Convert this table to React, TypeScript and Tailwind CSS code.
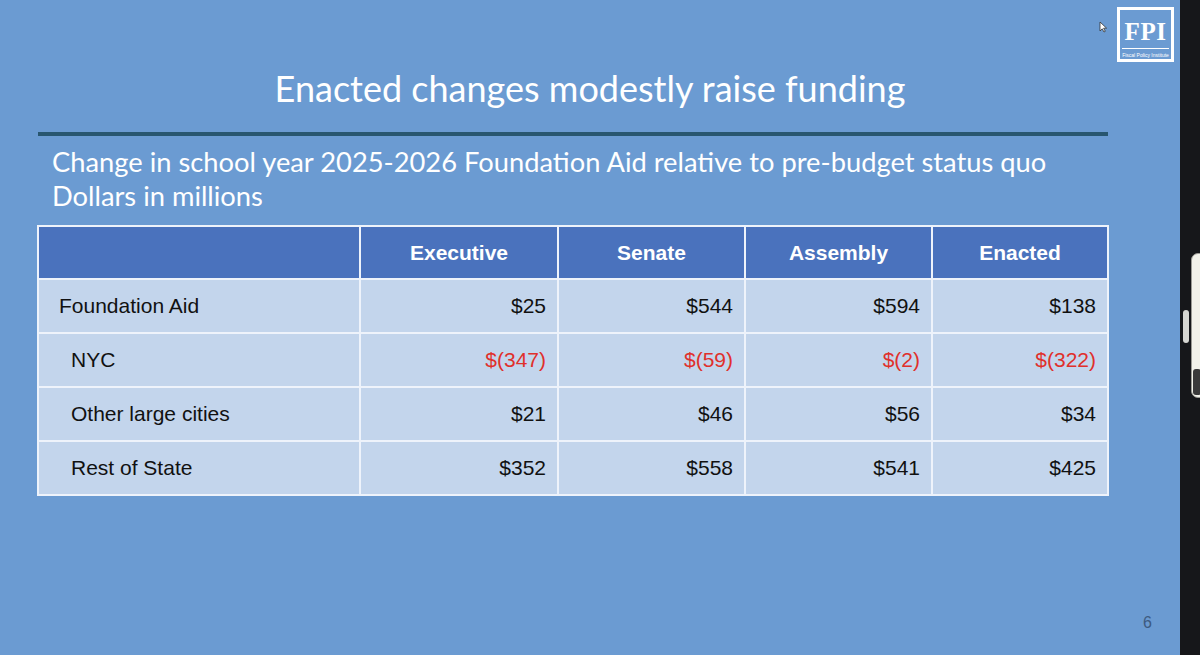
import React from "react";

const rows: { label: string; indent: boolean; vals: string[]; red?: boolean }[] = [
  { label: "Foundation Aid", indent: false, vals: ["$25", "$544", "$594", "$138"] },
  { label: "NYC", indent: true, vals: ["$(347)", "$(59)", "$(2)", "$(322)"], red: true },
  { label: "Other large cities", indent: true, vals: ["$21", "$46", "$56", "$34"] },
  { label: "Rest of State", indent: true, vals: ["$352", "$558", "$541", "$425"] },
];

const heads = ["Executive", "Senate", "Assembly", "Enacted"];

export default function App() {
  return (
    <div className="flex w-[1200px] h-[655px] overflow-hidden">
      <div className="relative flex flex-col w-[1180px] h-full bg-[#6b9bd2]">
        {/* logo */}
        <div className="absolute top-[7px] left-[1117px] w-[57px] h-[55px] border-[3px] border-white flex flex-col items-center">
          <div className="text-white font-bold text-[25px] leading-none mt-[9px] tracking-[0.5px]" style={{ fontFamily: '"Liberation Serif", serif' }}>
            FPI
          </div>
          <div className="w-[47px] h-[1px] bg-white mt-[4px]" />
          <div className="text-white text-[5px] leading-none mt-[4px]" style={{ fontFamily: '"Liberation Sans", sans-serif' }}>
            Fiscal Policy Institute
          </div>
        </div>
        {/* cursor */}
        <svg className="absolute left-[1099px] top-[21px]" width="9" height="12" viewBox="0 0 9 12">
          <path d="M1 1 L1 10 L3.2 7.8 L5 11 L6.3 10.3 L4.6 7.2 L7.6 7.2 Z" fill="#ffffff" stroke="#333" strokeWidth="0.8" />
        </svg>

        <div
          className="text-white text-[36px] leading-[40px] text-center mt-[68px]"
          style={{ fontFamily: 'Lato, "Open Sans", sans-serif' }}
        >
          Enacted changes modestly raise funding
        </div>
        <div className="ml-[38px] w-[1070px] h-[4px] bg-[#28566f] mt-[24px]" />
        <div
          className="text-white text-[27.3px] leading-[34px] ml-[52px] mt-[9px]"
          style={{ fontFamily: 'Lato, "Open Sans", sans-serif' }}
        >
          <div>Change in school year 2025-2026 Foundation Aid relative to pre-budget status quo</div>
          <div>Dollars in millions</div>
        </div>

        <div
          className="ml-[37px] mt-[12px] w-[1072px] grid grid-cols-[320px_196px_185px_185px_174px] grid-rows-[51px_52px_52px_52px_52px] gap-[2px] p-[2px] bg-[#eef3fb]"
          style={{ fontFamily: '"Liberation Sans", Arial, sans-serif' }}
        >
          <div className="bg-[#4a72bd]" />
          {heads.map((h) => (
            <div key={h} className="bg-[#4a72bd] flex items-center justify-center text-white font-bold text-[21px]">
              {h}
            </div>
          ))}
          {rows.map((r) => (
            <React.Fragment key={r.label}>
              <div className={`bg-[#c3d5ec] flex items-center text-[#111] text-[21px] ${r.indent ? "pl-[32px]" : "pl-[20px]"}`}>
                {r.label}
              </div>
              {r.vals.map((v, i) => (
                <div
                  key={i}
                  className={`bg-[#c3d5ec] flex items-center justify-end pr-[11px] text-[21px] ${r.red ? "text-[#e0302b]" : "text-[#111]"}`}
                >
                  {v}
                </div>
              ))}
            </React.Fragment>
          ))}
        </div>

        <div className="flex-1" />
        <div className="flex justify-end pr-[28px] pb-[20px]">
          <span className="text-[#3d5a80] text-[16px]" style={{ fontFamily: '"Liberation Sans", sans-serif' }}>
            6
          </span>
        </div>
      </div>
      <div className="relative w-[20px] h-full bg-[#16171a]">
        <div className="absolute left-[3px] top-[310px] w-[6px] h-[33px] rounded-full bg-[#d6d6d2]" />
        <div className="absolute left-[11px] top-[253px] w-[16px] h-[145px] rounded-[7px] bg-[#f2f2ea] border border-[#9a9a94] overflow-hidden">
          <div className="absolute left-[1px] bottom-[2px] w-[8px] h-[26px] rounded-[3px] bg-[#3a3a3a]" />
        </div>
      </div>
    </div>
  );
}
